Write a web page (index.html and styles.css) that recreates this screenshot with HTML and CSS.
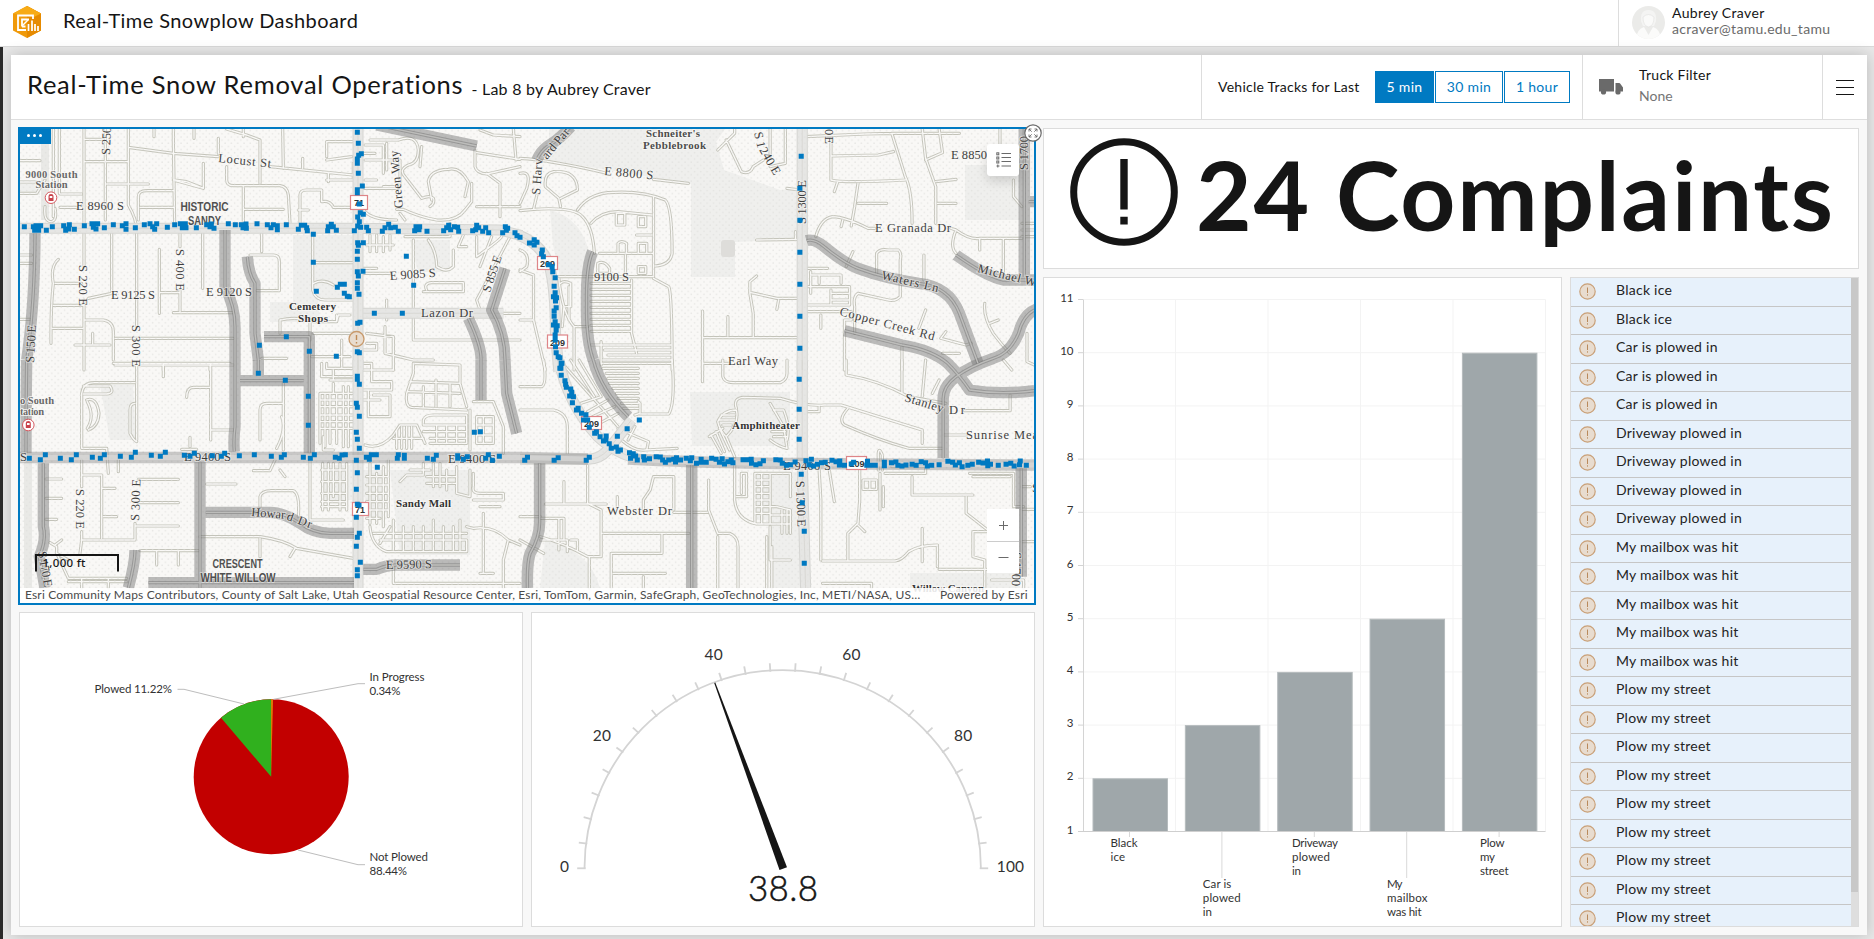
FILE: index.html
```html
<!DOCTYPE html>
<html lang="en">
<head>
<meta charset="utf-8">
<title>Real-Time Snowplow Dashboard</title>
<link rel="stylesheet" href="styles.css">
</head>
<body>
<header class="topbar">
  <svg class="logo" width="30" height="34" viewBox="0 0 30 34">
    <path d="M15 1L29 8.500V25.500L15 33L1 25.500V8.500Z" fill="#f09a0a"/>
    <path d="M15 1L29 8.500V25.500L15 33Z" fill="#e68a00"/>
    <path d="M1 8.500L15 1L29 8.500L22 12Z" fill="#f7ab16"/>
    <path d="M21 14V10.500H6V25H14M10 21.500V14.500H17M10 21.500H13.500" fill="none" stroke="#fff" stroke-width="1.800"/>
    <path d="M10 21L16 15" stroke="#fff" stroke-width="1.500"/>
    <path d="M16.500 19V26M20 15.500V26M23 19V26M26 21V26" stroke="#fff" stroke-width="1.700"/>
  </svg>
  <span class="app-title">Real-Time Snowplow Dashboard</span>
  <div class="user">
    <svg width="33" height="33" viewBox="0 0 33 33">
      <defs><clipPath id="av"><circle cx="16.500" cy="16.500" r="16.500"/></clipPath></defs>
      <g clip-path="url(#av)"><rect width="33" height="33" fill="#ebebe9"/>
      <path d="M9 15Q8 4 16.500 4Q25 4 24 15Q23 18 22 20H11Q10 18 9 15Z" fill="#f4f4f3"/>
      <path d="M4 33Q5 23 12 21L16.500 29L21 21Q28 23 29 33Z" fill="#fbfbfa"/>
      <path d="M11 11Q16.500 6 22 11Q22 20 16.500 21Q11 20 11 11Z" fill="#fafaf9" stroke="#e3e3e1" stroke-width=".6"/></g>
    </svg>
    <div class="user-text"><span class="user-name">Aubrey Craver</span><span class="user-mail">acraver@tamu.edu_tamu</span></div>
  </div>
</header>
<main class="stage">
<div class="dash">
  <div class="dash-head">
    <h1 class="dash-title">Real-Time Snow Removal Operations</h1>
    <span class="dash-sub">- Lab 8 by Aubrey Craver</span>
    <div class="tracks">
      <span class="tracks-label">Vehicle Tracks for Last</span>
      <div class="seg"><button class="on">5 min</button><button class="mid">30 min</button><button class="last">1 hour</button></div>
    </div>
    <div class="filter">
      <svg width="24" height="16" viewBox="0 0 24 16" fill="#6a6a6a"><path d="M0 0H15V12.500H0ZM16.500 4H20Q21 4 21.500 5L24 8.500V12.500H16.500Z"/><circle cx="4.500" cy="13" r="2.600"/><circle cx="19" cy="13" r="2.600"/></svg>
      <div class="filter-text"><span class="filter-name">Truck Filter</span><span class="filter-val">None</span></div>
    </div>
    <div class="menu"><svg width="18" height="17" viewBox="0 0 18 17" stroke="#151515" stroke-width="1"><path d="M0 1.500H18M0 8.500H18M0 15.500H18"/></svg></div>
  </div>
  <div class="dash-body">
    <div class="col-left">
      <section class="map">
        <svg class="map-art" viewBox="20 129 1014 474">
          <defs>
            <pattern id="dots" width="6.300" height="6.300" patternUnits="userSpaceOnUse"><circle cx="1.500" cy="1.500" r=".8"/><circle cx="4.650" cy="4.650" r=".8"/></pattern>
            <g id="roads" fill="none" stroke-linejoin="round" stroke-linecap="round">
              <path transform="translate(0 120) scale(.33333)" d="M252 27V440M252 540V750M316 27V300M385 27V255Q412 300 410 340V620M252 58H316M252 125H385M320 192H445M385 82L520 100L655 110M810 140L1060 165M655 55V100M520 27V60L524 318M462 27V50M582 27V55M680 27L740 45L780 60V190M730 27V50M848 27L850 145M908 115V145M680 140V180Q680 197 700 197H840Q862 200 865 225L870 310M730 200V310M730 268H850M520 180L610 205V130M525 180L560 185L610 205M415 300V230Q415 212 440 212H520M420 262H520M180 222H245M180 262H230M160 27V290M178 27V220M60 122H120M60 186H105M135 260Q130 305 155 305Q172 300 165 265M60 220H110L135 180M60 405H95M60 430H95M60 598H90M160 490Q150 440 175 418M165 490H245M160 490Q152 560 153 670M160 556H250M155 625H250M255 600H310Q340 605 340 635V720M345 655H700M225 675H330M278 675V640M335 340V520L265 535M478 388V580M478 518H540M540 330V380M540 510V578M520 578H700M608 330V505M785 325V395M750 405H820Q838 405 838 425V512H770M938 345V510Q945 540 975 540H1060M940 428H1060M940 490Q970 475 1000 495M900 310V225Q900 210 920 210H965V245Q990 240 1000 262H1060M895 270H925M985 185V160M980 180H1060V130M980 110V65H1060M980 120L1055 110M1095 75H1150V160M1090 100H1125M1095 120H1200V200H1150M1110 60H1195M1095 180H1130M1092 205H1195M1160 150V70M1195 60Q1250 40 1255 90Q1255 130 1225 135Q1195 150 1215 170L1265 235M1265 235Q1290 225 1300 235Q1305 250 1290 260M1265 80L1260 140M1395 230L1405 185Q1380 140 1345 148Q1290 150 1285 185L1295 240M1190 268H1210Q1255 290 1310 300Q1370 305 1395 270L1415 245V190M1200 280L1215 300M1425 90V140Q1430 160 1460 162L1560 140M1430 98L1560 118M1460 160L1500 190V290M1430 260H1560M1440 30L1480 45L1560 50M1540 27L1548 120M1090 268Q1110 300 1190 300M1090 460H1170M1090 445H1130M1110 345V395M1130 345V395M1150 350V395M1170 345V390M1215 350H1350V310M1240 360V460M1100 375H1180M1390 345L1375 380H1400M1285 360Q1310 395 1310 440Q1340 460 1360 440V390M1240 460V660H1560M1280 510Q1270 490 1295 488H1390V515H1270M1430 350V410Q1500 360 1505 350M1440 570L1430 540L1530 350M1475 350L1440 440M1010 585V605M930 660V600Q880 590 840 600V640M1050 585H1015L1010 605H940M1100 640L1180 650V750M1160 540V600M1155 620V700Q1200 710 1240 720H1300M1090 690H1130V670H1100M940 640H1060M935 710H1050M1025 660V745M785 715H860M345 735H700M630 735V750M490 735V750M1100 585H1250M1420 580H1560"/>
              <path transform="translate(520 120) scale(.338 .33333)" d="M0 115Q90 120 250 158M395 178L498 190M0 272L40 268Q160 260 185 290Q215 320 220 400M40 268L50 225M120 260L115 235L75 200Q70 160 100 155Q170 150 170 210L120 235M0 160Q35 150 20 205L0 250M170 270Q200 225 260 218Q360 210 430 240Q450 260 450 400Q445 435 400 438M210 310Q240 275 290 275L390 285M395 230V470M345 345H390M285 280H310V315H285ZM350 290H372V320H350ZM290 400V370Q300 360 315 370V400M350 400V370H375V400M235 400H395M312 405V470M230 430Q250 420 265 445V460H230ZM350 440H372V460H350ZM115 470H395V430M395 475L440 500Q450 520 450 750M330 480V640L345 700M210 490H330M210 508H330M210 526H330M210 544H330M210 562H330M210 580H330M210 598H330M210 616H330M210 634H330M120 490Q130 480 150 490V560H130L125 620M115 475Q125 580 160 620V750M145 500V600M160 620H200M210 675H450M250 690H450M260 705H450M245 720H450M240 665V735M0 390Q30 400 20 440L0 455M0 450L40 465V600M0 600H40L75 750M585 90L635 40V27M610 60L655 155Q680 165 690 140L720 120M785 27V130L740 140M740 27V110M790 205L830 210M845 50L1020 42L1100 40H1300M920 60V180Q950 190 1140 180M920 108L1060 105L1105 95M940 185L930 215M1100 40L1140 170Q1160 210 1160 310M1190 27L1200 115L1230 200V310M1200 120L1250 98L1240 27M1230 185L1290 178M1235 250H1290M1000 190L990 260L980 318M1000 250H1085M875 350Q890 295 925 290Q960 290 1030 325H1050M700 360L830 358M815 335V355M955 300L950 320M1275 325L1290 330Q1330 360 1360 355H1485M1290 330Q1270 380 1290 400M1360 355V390M1430 355V460M1460 180V230L1485 260M1485 310H1522M1485 330H1522M1485 350H1522M965 440L985 395M1195 405V480M1055 460V400Q1065 385 1090 390H1120Q1130 400 1125 420V530Q1110 545 1090 540L1000 520Q985 530 990 560V640M680 520V485L700 468M680 517L760 535H825M765 540L760 568M680 520L690 580V650M540 573V650M615 590V648M540 653H830M540 650V750M540 730H620M845 445H910M860 455V520M885 465V490M860 465H950V490M850 500H975V555H850M920 510V555M920 520H975M920 540H975M850 575H980V600H960V640M890 585V625M1200 570L1180 625M1260 635L1245 655L1320 675L1335 670M1245 655L1300 670M1375 550Q1370 590 1400 640Q1430 680 1450 700M1390 610L1415 600M1130 680V750M1300 700H1250M1500 640L1500 725L1522 735M960 640V750M1420 27V80"/>
              <path transform="translate(0 360) scale(.33333)" d="M245 265V100Q250 68 280 68H405M410 15V240M250 78H330Q345 100 320 102H250M260 120Q290 110 297 160Q295 200 265 210M262 125Q285 170 262 205M405 130Q390 130 390 150V220Q400 240 410 245M490 10V50M340 10H690M632 10V240M635 210H700M560 112Q560 82 580 82H632M780 240V150Q780 130 800 130H850M850 70V270M845 170Q860 210 830 265M570 232V260M545 268H590M245 265H320L325 340M355 300V335M245 300V380M245 345H305V535M415 358H535M415 428H535M405 498H535M245 540V515M245 540H405V490M305 385H345M310 470H350M245 540L240 580M138 357H185M138 415H185M138 478H170M150 548L170 560V580L205 655H380M165 555L185 540M170 580L205 600M245 655V684M325 655V684M205 665H380M420 572H595M470 575V615M535 575V615M620 372H708M760 332H810L825 300M840 330L855 350M780 440V410Q785 390 820 392H880Q900 400 895 470M620 530H700M600 530H780Q850 540 890 565L1060 595M780 535V590M885 565L870 590M930 300V480Q960 480 1030 480M968 310V450M985 310V450M1000 310V410M1020 310V450M1040 310V450M965 330H1040M965 365H1040M965 400H1040M965 425H1040M965 440H1040M965 10V50H1060M980 10V25H1060M990 60H1060M1000 30V60M960 100V250M975 100V260M990 100V250M1010 100V250M1030 80V260M1045 80V260M960 100H1060M960 120H1060M960 140H1060M960 165H1060M960 185H1060M960 205H1060M1000 70V100M970 230V270H1000M1090 10H1115V65H1175V90H1100M1090 30H1180M1090 90H1105V170H1170V105H1120M1090 120H1140M1240 10V40L1220 100Q1215 140 1235 142L1400 150M1240 10L1380 15V70L1400 140M1230 65L1380 70M1225 95L1380 100M1308 60V140M1270 80V140M1350 70V140M1095 255Q1140 270 1180 225L1200 195H1250L1275 250M1190 210V265M1205 200V265M1220 200V265M1235 200V265M1180 235H1270M1270 195V180Q1275 165 1300 165H1400V250H1290M1270 195H1400M1270 215H1400M1290 235H1400M1310 195V250M1340 195V250M1370 195V250M1410 150V270M1430 170H1480V250H1430ZM1430 195H1480M1430 225H1480M1450 170V250M1420 125H1480L1510 200V280M1110 310V490M1130 340V490M1150 320V500M1165 300V470M1100 350H1165M1100 375H1165M1100 400H1165M1100 425H1165M1100 450H1165M1100 475H1140M1200 365L1220 345H1270V310M1300 310V380M1320 310V380M1340 330V390M1370 320V400L1410 410V330M1230 330H1290M1280 350H1370M1280 370H1370M1110 500Q1115 560 1160 575H1400V540M1140 550L1170 500M1120 520H1400M1140 540H1400M1180 480V570M1210 500V575M1240 500V575M1270 500V575M1300 480V575M1330 500V575M1360 500V575M1380 480V575M1400 500L1420 505Q1480 495 1525 540L1560 555M1450 460V640M1525 540L1510 600V684M1440 640H1480M1180 640V670H1560M1420 420H1510V400H1440Q1415 400 1420 380V340M1440 440H1500M1180 620V650"/>
              <path transform="translate(520 360) scale(.338 .33333)" d="M0 80H65Q80 70 70 0M0 150H100Q140 160 140 200V290M240 10H450M245 25H350M255 40H350M260 55H350M265 70H350M275 85H350M285 100H350M290 115H350M300 130H350M305 145H350M450 0Q460 130 440 162H355V130L350 125M340 165L355 160M125 10L230 130L290 200M150 0L220 110M175 0L240 110M180 130L240 110M200 155L260 120M215 170L280 140M235 190L290 160M290 205L300 240Q340 275 370 270M310 215L380 245L375 270M370 270L465 265M320 240L340 200M540 0V65M600 0V50Q605 68 630 68H770Q790 60 790 40V0M640 145Q630 115 660 112L770 115Q850 140 900 135H950L1190 210V250M885 140V155H835M610 230Q650 190 640 150Q600 150 585 185Q590 210 610 230L635 290M565 225L595 280M580 215L605 275M590 205L620 270M560 230L600 205M595 165H635M590 180H635M600 195H625M740 130L780 200L790 265Q765 260 740 240M750 150H780Q800 200 790 240M740 200H780M745 215H785M750 230H790M970 145Q940 180 960 195Q1060 240 1150 265H1250M965 0V45Q1060 60 1150 110L1260 130M1130 0V100M1190 110L1200 0M1220 100L1240 60M1315 152H1450V105M1255 225H1320M1430 0L1455 30M75 432H255M130 365V430M200 310V430L240 450V590M455 450V350H395L385 390L365 420V450M288 410V440M455 457H555M558 360V450L585 520H620Q645 530 645 560V684M585 530V684M240 520H500M420 520V580H270V684M430 640H275M365 650V684M60 475H130V540H75M115 475V570M60 540H140V575M150 540H170V570M60 530Q130 550 200 590H240M0 470H60M0 540L70 580M205 590V684M635 310V420Q640 480 700 492H800M640 410H670V340H655V400M695 340H740V490M695 340V490M715 340V490M695 360H740M695 380H740M695 400H740M695 420H740M695 440H740M695 460H740M740 340H800V410M740 440H760L800 450V520M740 465H800M740 500V600H800M730 530V684M745 560V684M775 450V520M790 450V520M885 330L890 420V600M915 330L930 425M1005 330V420L1000 490L970 520V600M1000 495L1020 515M895 603H1110Q1130 600 1150 575Q1180 555 1235 555V620M1190 505V605M1100 320H1200V340H1080M1160 350V405H1340M1330 340H1460V440H1490M1320 410V460L1390 515M1340 515V590L1375 600V684M1340 515H1380M1340 350H1450M1240 628H1380M1015 360H1055V388H1015ZM1035 360V388M1065 340V450M1075 380V440M1060 330V280Q1062 260 1072 285V330M895 670H1040V684M1395 660H1490V684M1485 545H1522M1485 380H1510M1485 448H1522"/>
            </g>
            <g id="light" fill="none" stroke-linejoin="round">
              <path transform="translate(0 120) scale(.33333)" d="M60 325H1060L1500 330L1565 347M1074 27V750M1090 580H1510"/>
              <path transform="translate(520 120) scale(.338 .33333)" d="M-5 345Q60 370 85 430Q105 500 105 640L115 755M835 27V750"/>
              <path transform="translate(0 360) scale(.33333)" d="M1074 0V684"/>
              <path transform="translate(520 360) scale(.338 .33333)" d="M115 0Q140 130 230 230Q290 285 345 293M0 298H200Q235 298 260 270L330 180M835 0V310L845 684"/>
            </g>
            <g id="heavy" fill="none" stroke-linejoin="round">
              <path transform="translate(0 120) scale(.33333)" d="M105 340Q104 560 80 720M675 330V500Q705 560 705 620V720M742 410Q745 460 765 490V640L775 720M792 650H928V720M1130 15L1430 78M1515 445L1475 570Q1515 640 1515 720M1405 595Q1445 680 1443 720"/>
              <path transform="translate(520 120) scale(.338 .33333)" d="M150 20Q115 60 80 80Q60 95 50 120M215 395Q195 440 197 550Q195 660 217 720M848 362Q870 355 900 380Q960 430 1000 445Q1080 475 1180 490Q1270 500 1300 580L1355 730M1290 405Q1380 470 1430 480H1522M1492 27V470M1505 245H1530"/>
              <path transform="translate(0 360) scale(.33333)" d="M80 0Q78 150 78 280M705 0V200Q700 240 703 275M775 0V46M720 62H911M928 0V280M1443 0V120M1515 0L1520 100L1550 220M130 310V500Q140 540 118 590L135 684M600 305V684M617 457H810Q850 457 900 490Q940 520 990 520H1062M405 570Q405 610 385 684M445 668H1062M1090 628H1130Q1160 615 1190 615H1380"/>
              <path transform="translate(520 360) scale(.338 .33333)" d="M217 0Q240 90 320 170M960 -88L1130 -45Q1220 -30 1265 10Q1300 45 1330 90Q1420 105 1522 92M1530 -153Q1490 -140 1475 -80Q1450 -20 1400 -5Q1330 20 1290 50Q1250 80 1252 120V295M58 310V480Q60 530 30 580Q20 610 22 684M508 315V684M1483 325V650"/>
            </g>
            <path id="avenue" d="M20 457.500H520L588 459M628 459Q700 463 800 463.500L1034 465"/>
          </defs>
          <rect x="20" y="129" width="1014" height="474" fill="#f9f8f6"/>
          <g fill="#efefed"><path d="M549 129H725L716 142L724 170L780 190L800 188V239L735 242V277H691V184L549 160ZM965 165H1020V220H965Z"/><path d="M293 235H354V300H318L320 322H270V302H293ZM550 210Q590 220 592 275L560 276L553 245ZM690 392H790V446H692ZM410 240H450V272H418ZM20 180H40V195H20ZM100 385H133L136 440H110ZM320 465H352V500H322ZM390 470H470V555H400ZM360 470H385V520H368ZM545 540Q590 550 600 588H540ZM754 472H800V588H770V520H754ZM910 573H1020V588H910Z"/></g>
          <g stroke="#e9e9e6" fill="none" stroke-width="8"><path d="M45 129V220M28 462V588"/></g>
          <use href="#roads" class="casing"/>
          <use href="#roads" class="core"/>
          <rect x="721" y="240" width="14" height="17" rx="3" fill="#deddda"/>
          <g class="light-a"><use href="#light"/></g>
          <g class="light-b"><use href="#light"/></g>
          <g class="light-c"><use href="#light"/></g>
          <rect x="20" y="129" width="1014" height="474" class="dotfill"/>
          <g class="heavy-a"><use href="#heavy"/></g>
          <g class="heavy-b"><use href="#heavy"/></g>
          <g class="heavy-c"><use href="#heavy"/></g>
          <use href="#avenue" class="avenue-a"/>
          <use href="#avenue" class="avenue-b"/>
          <g class="shield">
            <rect x="350.500" y="195.500" width="17" height="14"/><text x="359" y="206" text-anchor="middle">71</text>
            <rect x="352.500" y="502.500" width="16" height="13"/><text x="360" y="513" text-anchor="middle">71</text>
            <rect x="537.500" y="256.500" width="20" height="13"/><text x="547.500" y="267" text-anchor="middle">209</text>
            <rect x="547.500" y="335" width="20" height="13"/><text x="557.500" y="345.500" text-anchor="middle">209</text>
            <rect x="581.500" y="416.500" width="20" height="13"/><text x="591.500" y="427" text-anchor="middle">209</text>
            <rect x="846.500" y="456.500" width="20" height="13"/><text x="857" y="467" text-anchor="middle">209</text>
          </g>
          <g fill="#fff" stroke="#d55a60" stroke-width="1"><circle cx="51" cy="197.700" r="5.800"/><circle cx="28.300" cy="425" r="5.800"/></g>
          <g fill="#c9434b"><path d="M48.500 201V196Q48.500 194 51 194T53.500 196V201ZM25.800 428V423Q25.800 421 28.300 421T30.800 423V428Z"/></g>
          <g fill="#fff"><rect x="49.700" y="196" width="2.600" height="2"/><rect x="27" y="423" width="2.600" height="2"/></g>
          <g class="street">
            <text transform="translate(110 155) rotate(-88)" textLength="28">S 250</text>
            <text transform="translate(218 162) rotate(6)" textLength="53">Locust St</text>
            <text x="76" y="210" textLength="48">E 8960 S</text>
            <text transform="translate(403 208) rotate(-95)" textLength="58">Green Way</text>
            <text transform="translate(79 265) rotate(90)" textLength="41">S 220 E</text>
            <text transform="translate(176 249) rotate(90)" textLength="42">S 400 E</text>
            <text x="111" y="299" textLength="44">E 9125 S</text>
            <text x="206" y="296" textLength="46">E 9120 S</text>
            <text transform="translate(34 363) rotate(-87)" textLength="38">S 150 E</text>
            <text transform="translate(132 325) rotate(90)" textLength="42">S 300 E</text>
            <text transform="translate(390 280) rotate(-4)" textLength="46">E 9085 S</text>
            <text x="421" y="317" textLength="52">Lazon Dr</text>
            <text transform="translate(490 293) rotate(-72)" textLength="38">S 855 E</text>
            <text transform="translate(540 195) rotate(-86)" textLength="36">S Harv</text>
            <text transform="translate(547 160) rotate(-50)" textLength="36">ard Par</text>
            <text transform="translate(604 175) rotate(5)" textLength="49">E 8800 S</text>
            <text transform="translate(754 133) rotate(76)" textLength="16">S 1</text>
            <text transform="translate(759 150) rotate(60)" textLength="30">240 E</text>
            <text transform="translate(806 224) rotate(-90)" textLength="44">S 1300 E</text>
            <text transform="translate(825 129) rotate(90)" textLength="15">0 E</text>
            <text x="951" y="159" textLength="36">E 8850</text>
            <text transform="translate(1028 170) rotate(-90)" textLength="34">S 1700</text>
            <text x="875" y="232" textLength="76">E Granada Dr</text>
            <text x="594" y="281" textLength="35">9100 S</text>
            <text transform="translate(881 279) rotate(13)" textLength="58">Waters Ln</text>
            <text transform="translate(977 272) rotate(14)" textLength="60">Michael W</text>
            <text transform="translate(839 315) rotate(15)" textLength="98">Copper Creek Rd</text>
            <text x="728" y="365" textLength="50">Earl Way</text>
            <text transform="translate(904 401) rotate(17)" textLength="40">Stanley</text>
            <text x="949" y="414" textLength="16">Dr</text>
            <text x="966" y="439" textLength="72">Sunrise Mea</text>
            <text x="20" y="461">S</text>
            <text x="184" y="461" textLength="47">E 9400 S</text>
            <text x="448" y="463" textLength="48">E 9400 S</text>
            <text x="783" y="470" textLength="48">E 9400 S</text>
            <text transform="translate(76 489) rotate(90)" textLength="40">S 220 E</text>
            <text transform="translate(139 521) rotate(-88)" textLength="42">S 300 E</text>
            <text transform="translate(251 516) rotate(5)" textLength="34">Howar</text>
            <text transform="translate(286 519.500) rotate(20)" textLength="26">d Dr</text>
            <text transform="translate(386 569) rotate(-1)" textLength="46">E 9590 S</text>
            <text transform="translate(38 552) rotate(80)" textLength="36">S 170 E</text>
            <text x="607" y="515" textLength="65">Webster Dr</text>
            <text transform="translate(796 481) rotate(88)" textLength="46">S 1300 E</text>
            <text transform="translate(1013 552) rotate(92)" textLength="34">S 1700</text>
            <text x="1032" y="492">S</text>
          </g>
          <g class="place soft"><text x="25.500" y="178" textLength="52">9000 South</text><text x="35.500" y="188" textLength="32">Station</text><text x="20" y="404" textLength="34">o South</text><text x="20" y="415" textLength="24">tation</text></g>
          <g class="place soft wide"><text x="646" y="137" textLength="54">Schneiter's</text><text x="643" y="149" textLength="63">Pebblebrook</text></g>
          <g class="place"><text x="289" y="310" textLength="47">Cemetery</text><text x="298" y="322" textLength="30">Shops</text><text x="396" y="507" textLength="55">Sandy Mall</text><text x="732" y="428.500" textLength="68">Amphitheater</text><text x="912" y="592" textLength="72">Willow Canyon</text></g>
          <g class="area"><text x="180.500" y="211" textLength="48" lengthAdjust="spacingAndGlyphs">HISTORIC</text><text x="188" y="225" textLength="33" lengthAdjust="spacingAndGlyphs">SANDY</text><text x="212.500" y="568" textLength="50" lengthAdjust="spacingAndGlyphs">CRESCENT</text><text x="200.500" y="582" textLength="75" lengthAdjust="spacingAndGlyphs">WHITE WILLOW</text></g>
          <g class="vehicles">
            <path transform="translate(0 120) scale(.33333)" d="M1072 37h0M1075 70h0M1084 101h0M1076 106h0M1072 117h0M1072 130h0M1075 160h0M1087 198h0M1072 209h0M1072 218h0M1078 252h0M1081 278h0M1090 283h0M1073 291h0M1078 305h0M1073 318h0M1082 322h0M1100 322h0M1063 332h0M1105 332h0M73 320h0M100 320h0M108 317h0M122 317h0M104 331h0M116 331h0M139 331h0M157 320h0M191 317h0M208 314h0M197 331h0M206 327h0M223 328h0M253 317h0M276 311h0M285 311h0M293 311h0M280 322h0M288 327h0M313 323h0M340 314h0M367 317h0M378 311h0M378 328h0M406 323h0M433 314h0M450 311h0M458 320h0M470 311h0M464 328h0M502 322h0M524 314h0M541 311h0M556 311h0M547 323h0M558 323h0M589 323h0M620 314h0M634 312h0M642 325h0M630 320h0M685 311h0M706 314h0M724 314h0M738 312h0M729 323h0M739 325h0M771 311h0M802 314h0M820 314h0M813 323h0M832 317h0M832 329h0M859 314h0M895 328h0M904 316h0M914 316h0M920 323h0M922 332h0M983 332h0M985 320h0M994 313h0M1000 320h0M1009 331h0M1147 334h0M1155 323h0M1166 313h0M1172 323h0M1186 322h0M1195 334h0M1244 332h0M1248 320h0M1259 320h0M1257 329h0M1281 334h0M1331 332h0M1340 323h0M1346 316h0M1352 329h0M1363 320h0M1373 322h0M1376 334h0M1418 332h0M1430 316h0M1436 323h0M1427 329h0M1448 334h0M1457 323h0M1466 338h0M1508 338h0M1516 320h0M1523 325h0M1519 331h0M1545 338h0M1551 347h0M940 343h0M1073 368h0M1090 368h0M1075 376h0M1072 394h0M1072 418h0M1219 409h0M940 427h0M1072 455h0M1089 454h0M1075 468h0M1072 488h0M1072 505h0M1077 523h0M1021 493h0M1033 493h0M1012 502h0M1033 520h0M1042 529h0M1048 530h0M949 514h0M1241 496h0M1123 580h0M1207 580h0M1073 610h0M1080 607h0M859 650h0M778 676h0M928 694h0M1009 709h0M1072 695h0M1078 698h0"/>
            <path transform="translate(520 120) scale(.338 .33333)" d="M0 352h0M28 369h0M42 359h0M42 375h0M50 367h0M66 390h0M64 401h0M69 410h0M84 434h0M95 440h0M97 455h0M104 473h0M101 499h0M104 518h0M99 530h0M108 533h0M105 543h0M107 563h0M101 573h0M101 589h0M104 605h0M99 615h0M110 617h0M107 630h0M104 645h0M104 660h0M105 680h0M107 698h0M118 713h0M113 710h0M122 730h0M121 745h0M832 109h0M828 205h0M828 301h0M828 397h0M828 493h0M828 589h0M828 685h0"/>
            <path transform="translate(0 360) scale(.33333)" d="M1072 49h0M1072 58h0M1078 73h0M1069 130h0M1072 142h0M1078 169h0M1069 217h0M1072 238h0M1078 265h0M1069 301h0M1072 338h0M1069 388h0M1072 433h0M1077 436h0M1069 472h0M1078 520h0M1072 532h0M1069 559h0M1081 607h0M1072 629h0M1072 647h0M775 40h0M856 61h0M925 109h0M925 196h0M88 295h0M121 299h0M136 284h0M181 295h0M214 299h0M229 284h0M277 292h0M301 295h0M313 284h0M361 289h0M394 292h0M406 277h0M454 286h0M481 289h0M496 277h0M553 286h0M570 289h0M583 280h0M637 287h0M664 289h0M674 280h0M718 287h0M763 284h0M814 289h0M844 292h0M853 284h0M910 292h0M931 295h0M943 284h0M1006 292h0M1018 295h0M1026 285h0M1036 284h0M1099 292h0M1108 298h0M1114 284h0M1129 284h0M1132 322h0M1195 284h0M1192 295h0M1213 286h0M1213 295h0M1282 295h0M1300 298h0M1309 286h0M1373 287h0M1373 295h0M1390 298h0M1402 290h0M1465 284h0M1457 295h0M1477 301h0M1498 289h0M1423 217h0M1441 215h0"/>
            <path transform="translate(520 360) scale(.338 .33333)" d="M124 10h0M118 25h0M122 46h0M133 62h0M135 73h0M137 82h0M150 87h0M153 97h0M147 108h0M158 110h0M155 128h0M172 145h0M167 150h0M182 160h0M195 164h0M188 180h0M200 180h0M205 202h0M226 215h0M221 220h0M237 230h0M255 228h0M247 243h0M254 240h0M264 251h0M270 265h0M285 261h0M290 274h0M297 270h0M324 278h0M335 281h0M327 295h0M342 288h0M347 300h0M366 290h0M368 300h0M383 296h0M403 290h0M415 291h0M422 300h0M430 307h0M440 300h0M455 298h0M463 293h0M460 306h0M475 300h0M492 295h0M508 293h0M504 302h0M522 310h0M536 298h0M536 307h0M551 307h0M567 295h0M580 298h0M598 296h0M590 307h0M605 312h0M615 305h0M625 300h0M630 308h0M660 299h0M672 299h0M684 298h0M685 310h0M698 314h0M710 311h0M720 302h0M757 299h0M770 300h0M776 310h0M788 316h0M800 314h0M814 306h0M846 302h0M862 298h0M855 314h0M868 318h0M880 313h0M892 308h0M903 307h0M923 301h0M935 305h0M946 303h0M945 315h0M960 316h0M980 312h0M987 307h0M1028 304h0M1038 316h0M1051 316h0M1026 316h0M1078 307h0M1078 317h0M1099 308h0M1112 306h0M1118 316h0M1130 318h0M1142 315h0M1160 313h0M1172 316h0M1187 305h0M1200 308h0M1205 318h0M1218 316h0M1240 314h0M1266 304h0M1280 307h0M1288 315h0M1300 308h0M1308 320h0M1325 316h0M1338 313h0M1357 307h0M1370 309h0M1383 303h0M1384 317h0M1392 313h0M1415 316h0M1438 313h0M1452 310h0M1462 318h0M1480 303h0M1478 314h0M1498 316h0M14 301h0M22 292h0M101 301h0M113 293h0M196 301h0M205 292h0M353 180h0M317 206h0M288 229h0M826 58h0M826 148h0M826 238h0M832 343h0M835 428h0M841 514h0M841 610h0"/>
          </g>
          <g><circle cx="356.500" cy="339" r="7.500" fill="#e8dccf" stroke="#c89a6c" stroke-width="1.300"/><path d="M356.500 335V340M356.500 342V343.500" stroke="#c08a55" stroke-width="1.400"/></g>
          <path d="M36 571.500V555H118V571.500" fill="none" stroke="#151515" stroke-width="2"/>
          <text class="scale" x="42.500" y="567" textLength="43">1,000 ft</text>
        </svg>
        <div class="credits"><span class="cr-a">Esri Community Maps Contributors, County of Salt Lake, Utah Geospatial Resource Center, Esri, TomTom, Garmin, SafeGraph, GeoTechnologies, Inc, METI/NASA, US…</span><span class="cr-b">Powered by Esri</span></div>
        <div class="frame"></div>
        <div class="handle"><i></i><i></i><i></i></div>
        <div class="legend"><svg width="15" height="16" viewBox="0 0 15 16" fill="none" stroke="#6a6a6a" stroke-width="1"><path d="M5.500 1.500H15M5.500 5.500H15M5.500 9.500H15M5.500 14H15" stroke-width="1.200"/><rect x=".8" y=".8" width="2" height="2"/><rect x=".8" y="5" width="2" height="2"/><rect x=".8" y="9" width="2" height="2"/><path d="M.5 14H3.500M1.800 12.500V15.500"/></svg></div>
        <div class="zoom"><span><svg width="11" height="11" viewBox="0 0 11 11" stroke="#6a6a6a"><path d="M1 5.500H10M5.500 1V10"/></svg></span><span><svg width="11" height="11" viewBox="0 0 11 11" stroke="#6a6a6a"><path d="M.5 5.500H10.500"/></svg></span></div>
        <div class="expand"><svg width="18" height="18" viewBox="0 0 18 18" fill="none" stroke="#6a6a6a"><circle cx="9" cy="9" r="8.200" fill="#fff" stroke-width="1.200"/><path d="M5 7.500V5H7.500M10.500 5H13V7.500M13 10.500V13H10.500M7.500 13H5V10.500M5 5L7.700 7.700M13 5L10.300 7.700M13 13L10.300 10.300M5 13L7.700 10.300" stroke-width=".9"/></svg></div>
      </section>
      <div class="pair">
        <section class="panel">
          <svg class="art" viewBox="20 613 502 313">
            <circle cx="271.200" cy="776.800" r="77.500" fill="#c20000"/>
            <path d="M271.200 776.800L221 717.800A77.500 77.500 0 0 1 271.200 699.300Z" fill="#30b01e"/>
            <path d="M271.200 776.800V699.300A77.500 77.500 0 0 1 272.900 699.300Z" fill="#e69008"/>
            <path d="M177.500 689.300H184L244 704M273.500 699.300L358 683.700H365M298 850L358 864.700H365" fill="none" stroke="#bdbdbd"/>
            <g class="pie-text"><text x="94.500" y="692.500" textLength="77.500">Plowed 11.22%</text><text x="369.500" y="680.500" textLength="55">In Progress</text><text x="369.500" y="694.500" textLength="31">0.34%</text><text x="369.500" y="861.300" textLength="58.500">Not Plowed</text><text x="369.500" y="875.300" textLength="37.500">88.44%</text></g>
          </svg>
        </section>
        <section class="panel">
          <svg class="art" viewBox="532 613 502 313">
            <g id="gauge" stroke="#d4d4d4" stroke-width="1.800" fill="none"><path d="M584.500 868.300A198.200 198.200 0 0 1 980.900 868.300"/></g>
            <path d="M715.300 682.500L787 867.300L779.500 870L714.200 683Z" fill="#151515"/>
            <g class="gauge-text"><text x="564.500" y="871.500">0</text><text x="602" y="740.800">20</text><text x="713.800" y="659.800">40</text><text x="851.500" y="659.800">60</text><text x="963.200" y="740.800">80</text><text x="1010.500" y="871.500">100</text></g>
            <text class="gauge-value" x="748" y="900.500" textLength="70">38.8</text>
          </svg>
        </section>
      </div>
    </div>
    <div class="col-right">
      <section class="panel">
        <svg class="art" viewBox="1044 129 814 139">
          <circle cx="1124" cy="192" r="50.300" fill="none" stroke="#151515" stroke-width="7"/>
          <path d="M1120.300 159H1127.700V209.500H1120.300ZM1120.300 216.700H1127.700V224.500H1120.300Z" fill="#151515"/>
          <text class="headline" x="1196" y="231" textLength="637">24 Complaints</text>
        </svg>
      </section>
      <div class="pair2">
        <section class="panel">
          <svg class="art" viewBox="1044 278 517 648">
            <g id="bars"></g>
          </svg>
        </section>
        <section class="panel list"><ul id="rows"></ul><div class="track"><div class="thumb"></div></div></section>
      </div>
    </div>
  </div>
</div>
</main>
<script src="app.js"></script>
</body>
</html>
```

FILE: styles.css
```css
* { box-sizing: border-box; }
body { margin: 0; width: 1874px; height: 939px; overflow: hidden; font-family: Lato, "Noto Sans", sans-serif; color: #151515; display: flex; flex-direction: column; background: #e8e8e8; }
svg { display: block; }
.topbar { height: 47px; flex: none; background: #fff; border-bottom: 1px solid #d9d9d9; display: flex; align-items: center; padding-left: 12px; }
.logo { margin-top: -2px; }
.app-title { font-size: 20px; margin-left: 21px; margin-top: -6px; letter-spacing: .42px; }
.user { margin-left: auto; width: 256px; height: 46px; border-left: 1px solid #ddd; display: flex; align-items: center; padding: 0 0 2px 13px; gap: 7px; }
.user-text { display: flex; flex-direction: column; font-size: 14px; line-height: 16px; margin-top: -3px; white-space: nowrap; }
.user-name { letter-spacing: .35px; }
.user-mail { color: #6a6a6a; letter-spacing: .3px; }
.stage { flex: 1; border-left: 3px solid #2b2b2b; padding: 8px 7px 4px 8px; }
.dash { height: 880px; background: #f8f8f8; box-shadow: 0 0 14px rgba(0,0,0,.2); display: flex; flex-direction: column; }
.dash-head { height: 65px; flex: none; background: #fff; border-bottom: 1px solid #dedede; display: flex; align-items: center; padding-left: 16px; white-space: nowrap; }
.dash-title { margin: -6px 0 0; font-size: 25.5px; font-weight: 400; letter-spacing: .75px; }
.dash-sub { font-size: 16px; margin: 2px 0 0 8px; letter-spacing: .25px; }
.tracks { margin-left: auto; width: 381px; height: 64px; border-left: 1px solid #ddd; display: flex; align-items: center; padding-left: 16px; }
.tracks-label { font-size: 14px; letter-spacing: .25px; width: 157px; margin-top: -2px; }
.seg { display: flex; gap: 1px; }
.seg button { height: 32px; border: 1px solid #007ac2; background: #fff; color: #007ac2; font: 14px Lato, sans-serif; letter-spacing: .3px; padding: 0 0 2px; }
.seg .on { width: 59px; background: #007ac2; color: #fff; }
.seg .mid { width: 68px; }
.seg .last { width: 66px; }
.filter { width: 240px; height: 64px; border-left: 1px solid #ddd; display: flex; align-items: center; gap: 16px; padding-left: 16px; }
.filter-text { display: flex; flex-direction: column; font-size: 14px; line-height: 21px; margin-top: -5px; }
.filter-name { letter-spacing: .25px; }
.filter-val { color: #757575; }
.menu { width: 45px; height: 64px; border-left: 1px solid #ddd; display: flex; align-items: center; padding-left: 13px; }
.dash-body { flex: 1; padding: 8px; display: grid; grid-template-columns: 1016px 816px; gap: 8px; }
.col-left { display: flex; flex-direction: column; gap: 8px; }
.col-right { display: flex; flex-direction: column; gap: 8px; }
.col-right > .panel { height: 141px; }
.panel { background: #fff; border: 1px solid #dcdcdc; overflow: hidden; }
.art { width: 100%; height: 100%; }
.pair { height: 315px; display: grid; grid-template-columns: 504px 504px; gap: 8px; }
.pair2 { height: 650px; display: grid; grid-template-columns: 519px 289px; gap: 8px; }
.map { position: relative; height: 476px; padding: 1px; }
.map-art { width: 1014px; height: 474px; overflow: hidden; }
.casing { stroke: #c3c3b9; stroke-width: 9.5px; }
.core { stroke: #faf9f7; stroke-width: 4px; }
.dotfill { fill: url(#dots); }
#dots { fill: #dedddb; fill-opacity: .65; }
.light-a { stroke: #d5d5d2; stroke-width: 33px; }
.light-b { stroke: #e6e6e4; stroke-width: 27px; }
.light-c { stroke: #d2d1cc; stroke-width: 2px; }
.heavy-a { stroke: #7c7c7c; stroke-opacity: .5; stroke-width: 34px; }
.heavy-b { stroke: #6f6f6f; stroke-opacity: .45; stroke-width: 10px; }
.heavy-c { stroke: #bdbdbb; stroke-width: 4px; }
.avenue-a { fill: none; stroke: #8c8c8c; stroke-opacity: .45; stroke-width: 11.5px; }
.avenue-b { fill: none; stroke: #dadad8; stroke-opacity: .7; stroke-width: 5px; }
.shield rect { fill: #fff; stroke: #de8588; stroke-width: 1.2px; }
.shield text { font: 700 9px "Liberation Sans", sans-serif; fill: #333; }
.street text { font: 12.5px "Liberation Serif", serif; fill: #3f3f3f; stroke: #f8f7f5; stroke-width: 2px; stroke-opacity: .5; paint-order: stroke; }
.place text { font: 700 11px "Liberation Serif", serif; fill: #333; stroke: #f8f7f5; stroke-width: 1.5px; paint-order: stroke; }
.place.soft text { font-size: 10.5px; fill: #686868; }
.place.wide text { font-size: 11px; fill: #4c4c4c; }
.area text { font: 700 12.5px "Liberation Sans", sans-serif; fill: #505050; stroke: #f8f7f5; stroke-width: 1.5px; stroke-opacity: .6; paint-order: stroke; }
.vehicles { fill: none; stroke: #0079c1; stroke-width: 15px; stroke-linecap: square; }
.scale { font: 500 11.5px "Noto Sans", sans-serif; fill: #151515; }
.credits { position: absolute; left: 1px; right: 1px; bottom: 1px; height: 15px; background: rgba(255,255,255,.88); display: flex; justify-content: space-between; padding: 0 6px 0 5px; font-size: 12px; line-height: 13px; color: #4a4a4a; white-space: nowrap; }
.cr-a { letter-spacing: .17px; }
.cr-b { letter-spacing: .25px; }
.frame { position: absolute; inset: -1px; border: 2px solid #007ac2; }
.handle { position: absolute; left: -1px; top: -1px; width: 33px; height: 17px; background: #007ac2; display: flex; align-items: center; justify-content: center; gap: 3px; }
.handle i { width: 3px; height: 3px; border-radius: 50%; background: #fff; }
.legend { position: absolute; left: 968px; top: 16px; width: 32px; height: 32px; background: #fff; border-radius: 3px; display: flex; align-items: center; justify-content: center; box-shadow: 0 5px 12px rgba(0,0,0,.15); }
.zoom { position: absolute; left: 968px; top: 381px; width: 32px; height: 64px; background: #fff; }
.zoom span { height: 32px; display: flex; align-items: center; justify-content: center; }
.zoom span + span { border-top: 1px solid #ccc; }
.expand { position: absolute; left: 1005px; top: -4px; }
.pie-text text { font-size: 11.5px; fill: #323232; }
.gauge-text text { font-size: 15.5px; fill: #323232; text-anchor: middle; letter-spacing: .2px; }
.gauge-value { font-size: 35px; font-weight: 300; fill: #151515; stroke: #151515; stroke-width: .5px; }
.headline { font-size: 96px; font-weight: 700; fill: #151515; }
.chart-text { font-size: 11.5px; fill: #323232; }
.list { display: flex; }
.list ul { list-style: none; margin: 0; padding: 0; flex: 1; }
.list li { height: 28.53px; background: #e7f1fb; border-bottom: 1px solid #c6c6c6; display: flex; align-items: flex-start; padding: 5px 0 0 8px; gap: 20px; font-size: 14px; line-height: 17px; letter-spacing: .26px; color: #242424; }
.list li svg { flex: none; }
.list li span { margin-top: -2px; }
.track { width: 7px; background: #dedede; }
.thumb { height: 614px; background: #c8c8c8; }
```

FILE: app.js
```js
const NS = 'http://www.w3.org/2000/svg';
function add(parent, name, attrs, text) {
  const el = document.createElementNS(NS, name);
  for (const k in attrs) el.setAttribute(k, attrs[k]);
  if (text !== undefined) el.textContent = text;
  parent.appendChild(el);
}

// gauge ticks, one every 4 units
const gauge = document.getElementById('gauge');
for (let i = 0; i <= 25; i++) {
  const a = Math.PI * (1 - i / 25), c = Math.cos(a), s = Math.sin(a);
  add(gauge, 'path', { d: `M${782.7 + 197 * c} ${868.3 - 197 * s}L${782.7 + 205.5 * c} ${868.3 - 205.5 * s}` });
}

// complaint counts
const bars = document.getElementById('bars');
const y = v => 831.5 - (v - 1) * 53.2;
for (let v = 1; v <= 11; v++) {
  add(bars, 'path', { d: `M1083 ${y(v)}H1545.5`, stroke: '#f3f3f3' });
  add(bars, 'path', { d: `M1078 ${y(v)}H1083`, stroke: '#d4d4d4' });
  add(bars, 'text', { x: 1073.5, y: y(v) + 2, class: 'chart-text', 'text-anchor': 'end' }, v);
}
for (let i = 1; i <= 5; i++) add(bars, 'path', { d: `M${1083 + i * 92.5} 299.500V831`, stroke: '#f3f3f3' });
add(bars, 'path', { d: 'M1083.500 299.500V831', stroke: '#d4d4d4' });
const data = [
  [2, 1110.5, ['Black', 'ice'], [27, 14.5]],
  [3, 1202.8, ['Car is', 'plowed', 'in'], [28.5, 38, 9]],
  [4, 1292, ['Driveway', 'plowed', 'in'], [46, 38, 9]],
  [5, 1387, ['My', 'mailbox', 'was hit'], [15.5, 40.5, 34.5]],
  [10, 1480, ['Plow', 'my', 'street'], [24.5, 15, 28.5]]
];
data.forEach(([v, x, lines, w], i) => {
  const odd = i % 2;
  add(bars, 'path', { d: `M${1129.5 + i * 92.4} 831V${odd ? 878 : 837}`, stroke: '#d9d9d9' });
  add(bars, 'rect', { x: 1093 + i * 92.35, y: y(v) + .5, width: 74.5, height: 831.5 - y(v) - .5, fill: '#9fa7aa', stroke: '#b5bbbd' });
  lines.forEach((t, k) => add(bars, 'text', { x, y: (odd ? 888 : 847) + 14 * k, class: 'chart-text', textLength: w[k] }, t));
});
add(bars, 'path', { d: 'M1078 831.500H1545.500', stroke: '#cfcfcf' });

// complaint list
const counts = [['Black ice', 2], ['Car is plowed in', 3], ['Driveway plowed in', 4], ['My mailbox was hit', 5], ['Plow my street', 9]];
document.getElementById('rows').innerHTML = counts.map(([t, n]) =>
  `<li><svg width="17" height="17" viewBox="0 0 17 17"><circle cx="8.500" cy="8.500" r="7.700" fill="#e8dccf" stroke="#c9a078" stroke-width="1.200"/><path d="M8.500 4.500V10M8.500 11.300V12.600" stroke="#b98a5c" stroke-width="1"/></svg><span>${t}</span></li>`.repeat(n)).join('');
```
